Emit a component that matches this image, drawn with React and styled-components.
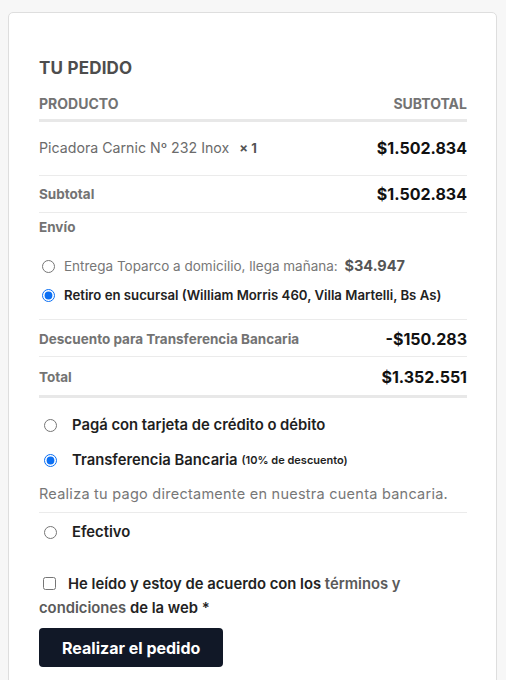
import React from 'react'
import styled, { createGlobalStyle } from 'styled-components'

const GlobalStyle = createGlobalStyle`
  body {
    margin: 0;
    background: #f7f7f7;
    font-family: Inter, "Open Sans", sans-serif;
  }
`

const Page = styled.div`
  padding: 12px 9px 0 8px;
`

const Card = styled.div`
  background: #fff;
  border: 1px solid #dedede;
  border-radius: 5px;
  padding: 45px 29px 40px 30px;
  min-height: 700px;
`

const Title = styled.h3`
  margin: 0 0 17px 0;
  font-size: 17px;
  line-height: 20px;
  font-weight: 700;
  color: #4d4d4d;
  letter-spacing: 0.2px;
`

const Row = styled.div`
  display: flex;
  align-items: center;
  justify-content: space-between;
  line-height: 20px;
  padding: ${({ pad }) => pad || '0'};
  border-bottom: ${({ thick }) => (thick ? '3px solid #e8e8e8' : '1px solid #ebebeb')};
`

const HeadCell = styled.span`
  font-size: 14px;
  line-height: 18px;
  font-weight: 700;
  color: #737373;
`

const Label = styled.span`
  font-size: 13.5px;
  line-height: 18px;
  font-weight: 700;
  color: #737373;
`

const Product = styled.span`
  font-size: 14.2px;
  color: #6b6b6b;
  b {
    font-weight: 700;
    color: #555;
    margin-left: 6px;
    font-size: 13px;
  }
`

const Amount = styled.span`
  font-size: 16px;
  font-weight: 700;
  color: #111;
`

const Shipping = styled.div`
  padding: 3px 0 14px 0;
  border-bottom: 1px solid #ebebeb;
`

const Options = styled.ul`
  list-style: none;
  margin: 20px 0 0 0;
  padding: 0;
  display: flex;
  flex-direction: column;
  gap: 9px;
`

const Option = styled.li`
  display: flex;
  align-items: center;
  gap: 9px;
  padding-left: 3px;
  line-height: 20px;
  input {
    margin: 0;
    width: 13px;
    height: 13px;
    accent-color: #0b6ff3;
  }
`

const OptText = styled.span`
  font-size: ${({ muted }) => (muted ? '13.5px' : '13.2px')};
  color: ${({ muted }) => (muted ? '#777' : '#222')};
  font-weight: ${({ muted }) => (muted ? 400 : 600)};
  b {
    margin-left: 3px;
    font-weight: 700;
    color: #555;
    font-size: 14.5px;
  }
`

const Payments = styled.ul`
  list-style: none;
  margin: 0;
  padding: 17px 0 0 0;
`

const Method = styled.li`
  padding: ${({ pad }) => pad || '0'};
  border-bottom: ${({ line }) => (line ? '1px solid #ebebeb' : 'none')};
`

const MethodHead = styled.label`
  display: flex;
  align-items: center;
  gap: 15px;
  padding-left: 5px;
  line-height: 20px;
  font-size: 14.8px;
  font-weight: 600;
  color: #1e1e1e;
  input {
    margin: 0;
    width: 13px;
    height: 13px;
    accent-color: #0b6ff3;
  }
  small {
    font-size: 11px;
    font-weight: 600;
    margin-left: -11px;
  }
`

const MethodDesc = styled.p`
  margin: 14px 0 8px 0;
  line-height: 20px;
  font-size: 14.5px;
  color: #777;
  letter-spacing: 0.25px;
`

const Terms = styled.label`
  display: block;
  margin-top: 30px;
  font-size: 14.8px;
  font-weight: 600;
  line-height: 24px;
  color: #222;
  input {
    margin: 0 12px 0 4px;
    width: 13px;
    height: 13px;
    vertical-align: -1px;
  }
  a {
    color: #5a5a5a;
    text-decoration: none;
  }
`

const Submit = styled.button`
  display: block;
  margin-top: 8px;
  background: #111827;
  color: #fff;
  border: none;
  border-radius: 4px;
  padding: 0 23px;
  height: 39px;
  font-family: inherit;
  font-size: 16px;
  font-weight: 700;
`

export default function App () {
  return (
    <>
      <GlobalStyle />
      <Page>
        <Card>
          <Title>TU PEDIDO</Title>
          <Row thick pad='0 0 6px 0'>
            <HeadCell>PRODUCTO</HeadCell>
            <HeadCell>SUBTOTAL</HeadCell>
          </Row>
          <Row pad='16px 0 17px 0'>
            <Product>Picadora Carnic Nº 232 Inox <b>× 1</b></Product>
            <Amount>$1.502.834</Amount>
          </Row>
          <Row pad='8px 0 8px 0'>
            <Label>Subtotal</Label>
            <Amount>$1.502.834</Amount>
          </Row>
          <Shipping>
            <Label>Envío</Label>
            <Options>
              <Option>
                <input type='radio' name='ship' />
                <OptText muted>Entrega Toparco a domicilio, llega mañana: <b>$34.947</b></OptText>
              </Option>
              <Option>
                <input type='radio' name='ship' defaultChecked />
                <OptText>Retiro en sucursal (William Morris 460, Villa Martelli, Bs As)</OptText>
              </Option>
            </Options>
          </Shipping>
          <Row pad='9px 0 7px 0'>
            <Label>Descuento para Transferencia Bancaria</Label>
            <Amount>-$150.283</Amount>
          </Row>
          <Row thick pad='10px 0 8px 0'>
            <Label>Total</Label>
            <Amount>$1.352.551</Amount>
          </Row>
          <Payments>
            <Method>
              <MethodHead>
                <input type='radio' name='pay' />
                Pagá con tarjeta de crédito o débito
              </MethodHead>
            </Method>
            <Method line pad='15px 0 0 0'>
              <MethodHead>
                <input type='radio' name='pay' defaultChecked />
                Transferencia Bancaria <small>(10% de descuento)</small>
              </MethodHead>
              <MethodDesc>Realiza tu pago directamente en nuestra cuenta bancaria.</MethodDesc>
            </Method>
            <Method pad='9px 0 0 0'>
              <MethodHead>
                <input type='radio' name='pay' />
                Efectivo
              </MethodHead>
            </Method>
          </Payments>
          <Terms>
            <input type='checkbox' />
            He leído y estoy de acuerdo con los <a href='#'>términos y condiciones</a> de la web *
          </Terms>
          <Submit>Realizar el pedido</Submit>
        </Card>
      </Page>
    </>
  )
}
